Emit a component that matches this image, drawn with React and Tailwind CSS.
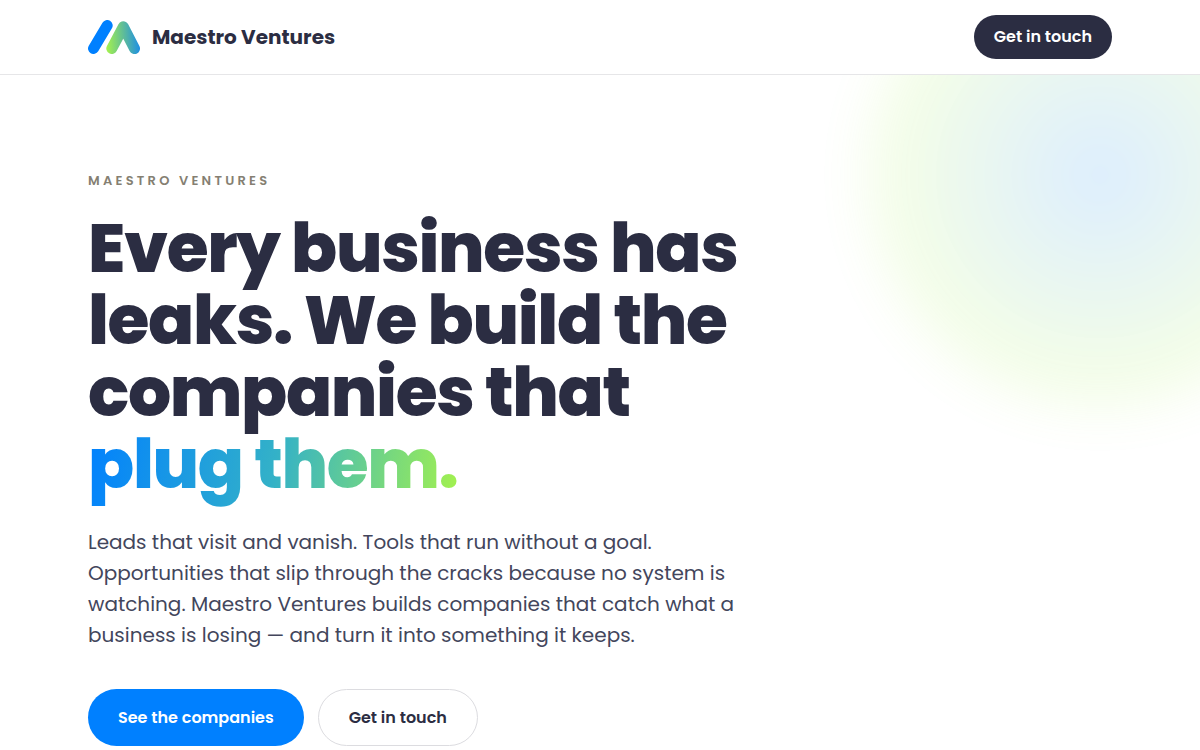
function Logo() {
  return (
    <svg viewBox="0 0 52 34" className="h-[34px] w-[52px] shrink-0" fill="none" strokeLinecap="round" strokeLinejoin="round" strokeWidth="11" aria-hidden="true">
      <defs>
        <linearGradient id="peak" gradientUnits="userSpaceOnUse" x1="18" y1="26" x2="54" y2="24">
          <stop offset="0" stopColor="#a6f34b" />
          <stop offset="0.5" stopColor="#5fbd98" />
          <stop offset="1" stopColor="#1488ee" />
        </linearGradient>
      </defs>
      <path d="M5.5 28.5L19.2 5.5" stroke="#0080ff" />
      <path d="M23.8 28.5L35.3 6.8L46.5 28.5" stroke="url(#peak)" />
    </svg>
  );
}

export default function App() {
  return (
    <div className="min-h-screen overflow-x-hidden bg-white font-['Poppins','Inter',sans-serif] text-[#2b2d42]">
      <header className="border-b border-[#e6e6e8] bg-white">
        <div className="mx-auto flex h-[74px] max-w-[1120px] items-center justify-between px-12">
          <a href="#" className="flex items-center gap-3 text-xl font-bold">
            <Logo />
            Maestro Ventures
          </a>
          <button type="button" className="h-11 rounded-full bg-[#2b2d42] px-5 text-base font-semibold text-white">
            Get in touch
          </button>
        </div>
      </header>
      <main className="relative overflow-hidden">
        <div
          aria-hidden="true"
          className="absolute -top-40 -right-40 size-[520px] rounded-full bg-[radial-gradient(circle,#0080ff_0%,#a6f34b_55%,transparent_70%)] opacity-[0.13] blur-[20px]"
        />
        <div className="relative mx-auto max-w-[1120px] px-12 py-24">
          <p className="text-[13px] leading-5 font-semibold tracking-[0.25em] text-[#857f72] uppercase">Maestro Ventures</p>
          <h1 className="mt-[22px] max-w-[720px] text-[68px] leading-[72px] font-extrabold tracking-[-0.02em]">
            Every business has
            <br />
            leaks. We build the
            <br />
            companies that
            <br />
            <span className="bg-linear-[100deg,#0080ff,#33b1c8_50%,#a6f34b] box-decoration-clone bg-clip-text pb-3 text-transparent">plug them.</span>
          </h1>
          <p className="mt-[26px] max-w-[680px] text-xl leading-[31px] text-[#43465c]">
            Leads that visit and vanish. Tools that run without a goal.
            <br />
            Opportunities that slip through the cracks because no system is
            <br />
            watching. Maestro Ventures builds companies that catch what a
            <br />
            business is losing — and turn it into something it keeps.
          </p>
          <div className="mt-[38px] flex gap-[14px]">
            <button type="button" className="h-[57px] rounded-full bg-[#0080ff] px-[30px] text-base font-semibold text-white">
              See the companies
            </button>
            <button type="button" className="h-[57px] rounded-full border border-[#dcdce0] bg-white px-[30px] text-base font-semibold">
              Get in touch
            </button>
          </div>
        </div>
      </main>
    </div>
  );
}
